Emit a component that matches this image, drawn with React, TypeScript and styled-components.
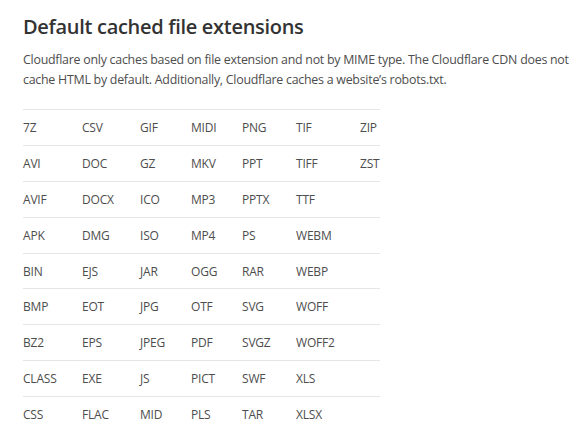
import React from "react";
import styled, { createGlobalStyle } from "styled-components";

const GlobalStyle = createGlobalStyle`
  html, body { margin: 0; padding: 0; background: #ffffff; }
  body { font-family: "Open Sans", "Noto Sans", sans-serif; -webkit-font-smoothing: antialiased; }
`;

const Page = styled.main`
  padding: 12px 23px 0 23px;
  width: 584px;
  box-sizing: border-box;
`;

const Heading = styled.h2`
  margin: 0;
  font-size: 20px;
  line-height: 30px;
  font-weight: 600;
  color: #333333;
  letter-spacing: -0.3px;
`;

const Intro = styled.p`
  margin: 8px 0 0 0;
  font-size: 12.4px;
  line-height: 19.5px;
  color: #4d4d4d;
  letter-spacing: -0.25px;
  width: 550px;
`;

const Table = styled.table`
  margin-top: 20px;
  border-collapse: collapse;
  table-layout: fixed;
  width: 357px;
`;

const Row = styled.tr`
  border-top: 1px solid #e6e6e6;
`;

const Cell = styled.td`
  height: 34.9px;
  padding: 0;
  font-size: 12px;
  color: #4d4d4d;
  vertical-align: middle;
  white-space: nowrap;
  letter-spacing: -0.2px;
`;

const widths = [59, 58, 51, 51, 54, 64, 20];

const rows: string[][] = [
  ["7Z", "CSV", "GIF", "MIDI", "PNG", "TIF", "ZIP"],
  ["AVI", "DOC", "GZ", "MKV", "PPT", "TIFF", "ZST"],
  ["AVIF", "DOCX", "ICO", "MP3", "PPTX", "TTF", ""],
  ["APK", "DMG", "ISO", "MP4", "PS", "WEBM", ""],
  ["BIN", "EJS", "JAR", "OGG", "RAR", "WEBP", ""],
  ["BMP", "EOT", "JPG", "OTF", "SVG", "WOFF", ""],
  ["BZ2", "EPS", "JPEG", "PDF", "SVGZ", "WOFF2", ""],
  ["CLASS", "EXE", "JS", "PICT", "SWF", "XLS", ""],
  ["CSS", "FLAC", "MID", "PLS", "TAR", "XLSX", ""],
];

export default function App() {
  return (
    <>
      <GlobalStyle />
      <Page>
        <Heading>Default cached file extensions</Heading>
        <Intro>
          Cloudflare only caches based on file extension and not by MIME type. The Cloudflare CDN does not
          cache HTML by default. Additionally, Cloudflare caches a website’s robots.txt.
        </Intro>
        <Table>
          <colgroup>
            {widths.map((w, i) => (
              <col key={i} style={{ width: w }} />
            ))}
          </colgroup>
          <tbody>
            {rows.map((r, i) => (
              <Row key={i}>
                {r.map((c, j) => (
                  <Cell key={j}>{c}</Cell>
                ))}
              </Row>
            ))}
          </tbody>
        </Table>
      </Page>
    </>
  );
}
